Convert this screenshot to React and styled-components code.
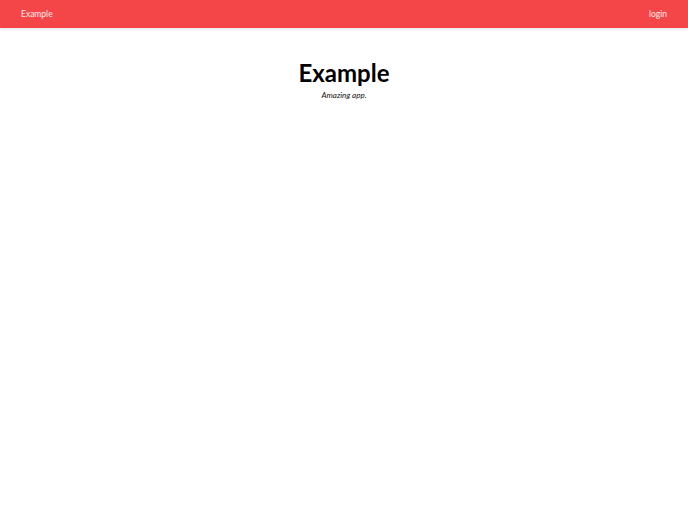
import React from "react";
import styled, { createGlobalStyle } from "styled-components";

const Global = createGlobalStyle`
  html, body { margin: 0; padding: 0; background: #fff; }
  body { font-family: Lato, "Open Sans", sans-serif; color: #000; }
`;

const Header = styled.header`
  height: 28px;
  background: #f44548;
  display: flex;
  align-items: center;
  justify-content: space-between;
  padding: 0 21px;
  box-shadow: 0 1px 3px rgba(0,0,0,0.12);
`;

const NavLink = styled.a`
  color: #fdecec;
  font-size: 8.5px;
  text-decoration: none;
`;

const Hero = styled.main`
  display: flex;
  flex-direction: column;
  align-items: center;
  padding-top: 31px;
`;

const Title = styled.h1`
  margin: 0;
  font-size: 24px;
  font-weight: 700;
  line-height: 1.15;
`;

const Subtitle = styled.p`
  margin: 3px 0 0;
  font-size: 8px;
  font-style: italic;
  color: #111;
`;

export default function App() {
  return (
    <>
      <Global />
      <Header>
        <NavLink href="#">Example</NavLink>
        <NavLink href="#">login</NavLink>
      </Header>
      <Hero>
        <Title>Example</Title>
        <Subtitle>Amazing app.</Subtitle>
      </Hero>
    </>
  );
}
